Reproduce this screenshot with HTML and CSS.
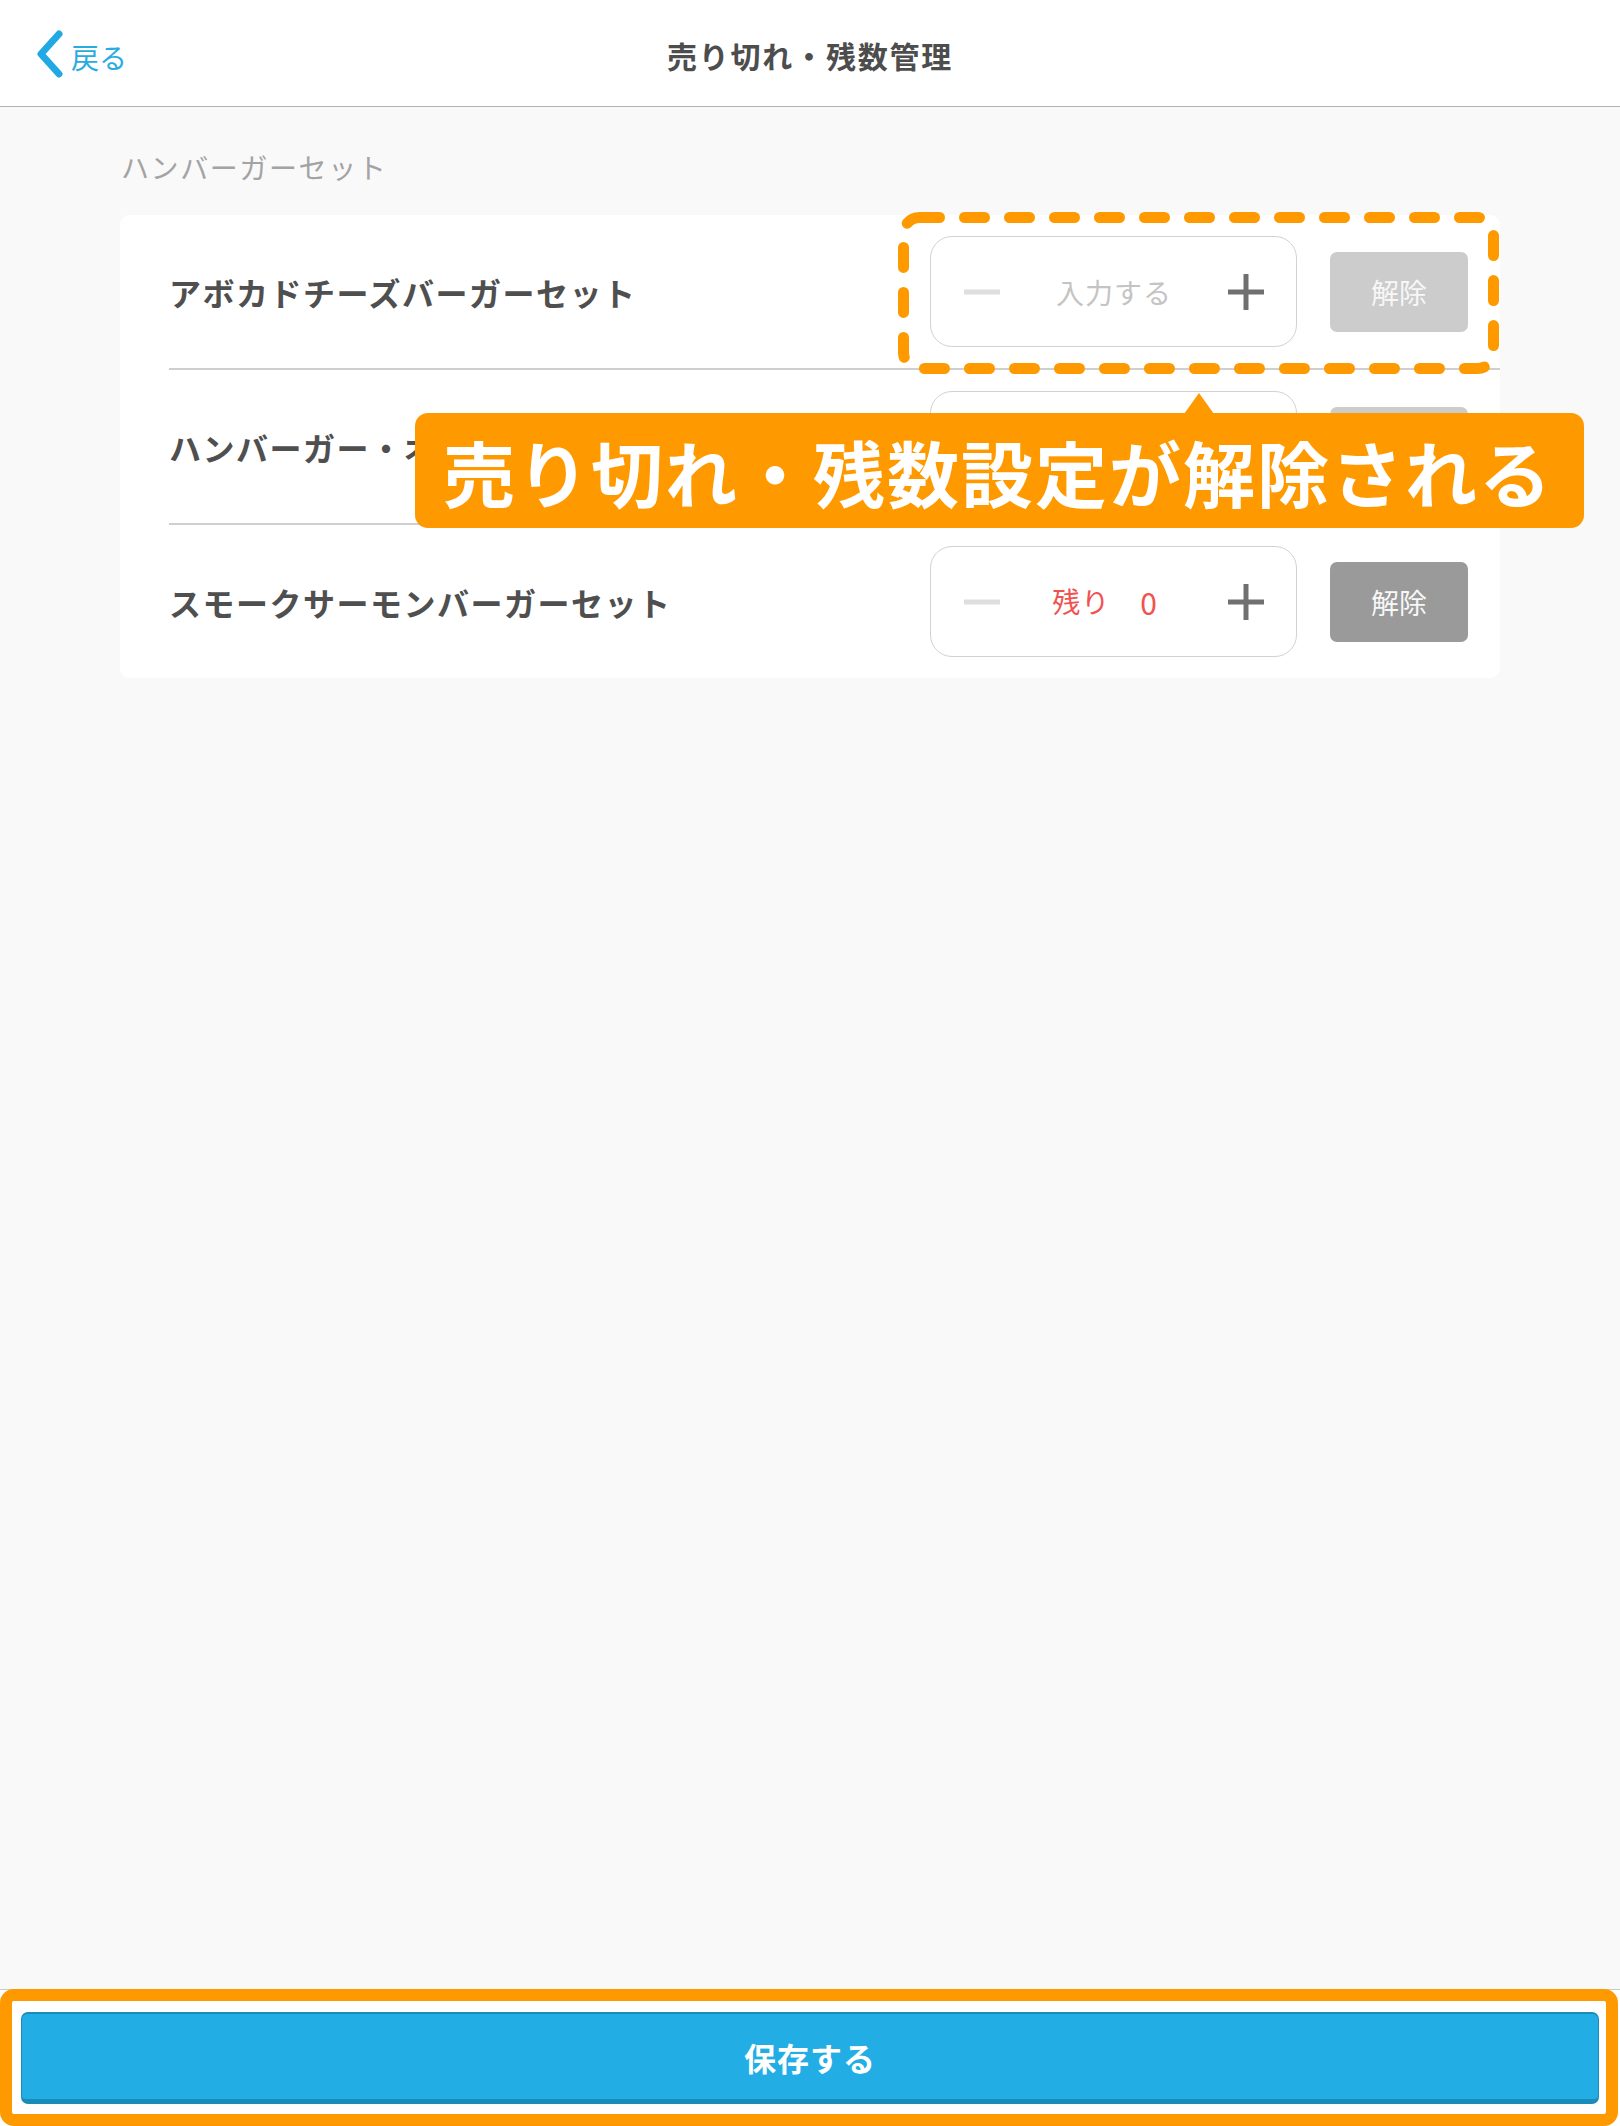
FILE: index.html
```html
<!DOCTYPE html>
<html lang="ja">
<head>
<meta charset="utf-8">
<title>売り切れ・残数管理</title>
<link rel="stylesheet" href="styles.css">
</head>
<body>
  <header class="topbar">
    <a class="back" href="#">
      <svg class="back-icon" width="28" height="48" viewBox="0 0 28 48" aria-hidden="true">
        <polyline points="22,4 4,24 22,44" fill="none" stroke="#22a8e2" stroke-width="7" stroke-linecap="round" stroke-linejoin="round"/>
      </svg>
      <span>戻る</span>
    </a>
    <h1 class="title">売り切れ・残数管理</h1>
    <div class="spacer"></div>
  </header>

  <main class="content">
    <div class="section-label">ハンバーガーセット</div>
    <div class="card">
      <div class="row">
        <div class="name">アボカドチーズバーガーセット</div>
        <div class="stepper">
          <svg class="icon" width="36" height="36" viewBox="0 0 36 36"><line x1="0" y1="18" x2="36" y2="18" stroke="#dedede" stroke-width="5"/></svg>
          <span class="value placeholder">入力する</span>
          <svg class="icon" width="36" height="36" viewBox="0 0 36 36"><line x1="0" y1="18" x2="36" y2="18" stroke="#707070" stroke-width="5"/><line x1="18" y1="0" x2="18" y2="36" stroke="#707070" stroke-width="5"/></svg>
        </div>
        <button class="clear disabled">解除</button>
      </div>
      <div class="row">
        <div class="name">ハンバーガー・オニオンリングセット</div>
        <div class="stepper">
          <svg class="icon" width="36" height="36" viewBox="0 0 36 36"><line x1="0" y1="18" x2="36" y2="18" stroke="#dedede" stroke-width="5"/></svg>
          <span class="value placeholder">入力する</span>
          <svg class="icon" width="36" height="36" viewBox="0 0 36 36"><line x1="0" y1="18" x2="36" y2="18" stroke="#707070" stroke-width="5"/><line x1="18" y1="0" x2="18" y2="36" stroke="#707070" stroke-width="5"/></svg>
        </div>
        <button class="clear disabled">解除</button>
      </div>
      <div class="row">
        <div class="name">スモークサーモンバーガーセット</div>
        <div class="stepper">
          <svg class="icon" width="36" height="36" viewBox="0 0 36 36"><line x1="0" y1="18" x2="36" y2="18" stroke="#dedede" stroke-width="5"/></svg>
          <span class="value remain"><span>残り</span><span class="num">0</span></span>
          <svg class="icon" width="36" height="36" viewBox="0 0 36 36"><line x1="0" y1="18" x2="36" y2="18" stroke="#707070" stroke-width="5"/><line x1="18" y1="0" x2="18" y2="36" stroke="#707070" stroke-width="5"/></svg>
        </div>
        <button class="clear active">解除</button>
      </div>
    </div>
  </main>

  <footer class="footer">
    <button class="save">保存する</button>
    <div class="footer-highlight"></div>
  </footer>

  <div class="dash-highlight">
    <svg width="601" height="162" viewBox="0 0 601 162" aria-hidden="true">
      <rect x="5.5" y="5.5" width="590" height="151" rx="16" ry="16" fill="none" stroke="#ff9900" stroke-width="11" stroke-linecap="round" stroke-dasharray="20 25"/>
    </svg>
  </div>

  <div class="callout">売り切れ・残数設定が解除される</div>
</body>
</html>
```

FILE: styles.css
```css
* {
  box-sizing: border-box;
}

html, body {
  margin: 0;
  padding: 0;
}

body {
  position: relative;
  width: 1620px;
  height: 2126px;
  display: flex;
  flex-direction: column;
  background: #f9f9f9;
  font-family: "Noto Sans CJK JP", "Noto Sans", sans-serif;
  color: #4f4f4f;
  overflow: hidden;
}

/* Header */
.topbar {
  height: 107px;
  flex: none;
  display: grid;
  grid-template-columns: 1fr auto 1fr;
  align-items: center;
  background: #ffffff;
  border-bottom: 1px solid #b2b2b2;
  padding: 0 37px;
}

.back {
  display: flex;
  align-items: center;
  gap: 6px;
  color: #29abe2;
  text-decoration: none;
  font-size: 28px;
  line-height: 1;
  padding-top: 2px;
  justify-self: start;
}

.back-icon {
  display: block;
}

.back span {
  padding-top: 6px;
}

.title {
  margin: 0;
  font-size: 30px;
  font-weight: 700;
  letter-spacing: 1.8px;
  color: #4d4d4d;
  line-height: 1;
  padding-top: 4px;
}

/* Content */
.content {
  flex: 1;
  padding: 40px 120px 0;
}

.section-label {
  font-size: 28px;
  line-height: 40px;
  letter-spacing: 1.6px;
  color: #a3a3a3;
  padding-left: 1px;
  font-weight: 400;
}

.card {
  margin-top: 28px;
  background: #ffffff;
  border-radius: 10px;
}

.row {
  height: 153px;
  margin-left: 49px;
  padding-right: 32px;
  display: flex;
  align-items: center;
  box-sizing: content-box;
}

.row + .row {
  border-top: 2px solid #cfcfcf;
}

.name {
  flex: 1;
  font-size: 32px;
  font-weight: 700;
  letter-spacing: 1.5px;
  color: #4f4f4f;
  white-space: nowrap;
  overflow: hidden;
}

.stepper {
  width: 367px;
  height: 111px;
  border: 1px solid #d2d2d2;
  border-radius: 22px;
  display: flex;
  align-items: center;
  justify-content: space-between;
  padding: 0 32px 0 33px;
  margin-right: 33px;
  flex: none;
}

.icon {
  display: block;
  flex: none;
}

.value {
  font-size: 28px;
  letter-spacing: 1px;
  line-height: 1;
}

.placeholder {
  color: #c4c4c4;
}

.remain {
  color: #f0534f;
  display: flex;
  gap: 30px;
  margin-right: 18px;
}

.remain .num {
  font-size: 30px;
}

.clear {
  width: 138px;
  height: 80px;
  border: none;
  border-radius: 7px;
  color: #f7f7f7;
  font-family: inherit;
  font-size: 28px;
  flex: none;
  padding: 0;
}

.clear.disabled {
  background: #cccccc;
}

.clear.active {
  background: #9a9a9a;
}

/* Footer */
.footer {
  position: relative;
  flex: none;
  height: 137px;
  background: #ffffff;
  border-top: 1px solid #c9c9c9;
  padding: 22px 21px 22px;
}

.save {
  display: block;
  width: 100%;
  height: 92px;
  background: #22aee4;
  border: 1px solid #1b8cba;
  border-top-width: 2px;
  border-bottom-width: 5px;
  border-radius: 7px;
  color: #ffffff;
  font-family: inherit;
  font-size: 32px;
  font-weight: 700;
  letter-spacing: 1px;
}

.footer-highlight {
  position: absolute;
  left: 0;
  right: 2px;
  top: -1px;
  bottom: 0;
  border: 12px solid #ff9900;
  border-radius: 14px;
  pointer-events: none;
}

/* Annotations */
.dash-highlight {
  position: absolute;
  left: 898px;
  top: 212px;
  width: 601px;
  height: 162px;
}

.dash-highlight svg {
  display: block;
}

.callout {
  position: absolute;
  left: 415px;
  top: 413px;
  width: 1169px;
  height: 115px;
  background: #ff9900;
  border-radius: 13px;
  color: #ffffff;
  font-size: 72px;
  font-weight: 700;
  letter-spacing: 2px;
  line-height: 115px;
  padding-left: 28px;
  white-space: nowrap;
}

.callout::before {
  content: "";
  position: absolute;
  left: 769px;
  top: -20px;
  border-left: 15px solid transparent;
  border-right: 15px solid transparent;
  border-bottom: 21px solid #ff9900;
}
```
